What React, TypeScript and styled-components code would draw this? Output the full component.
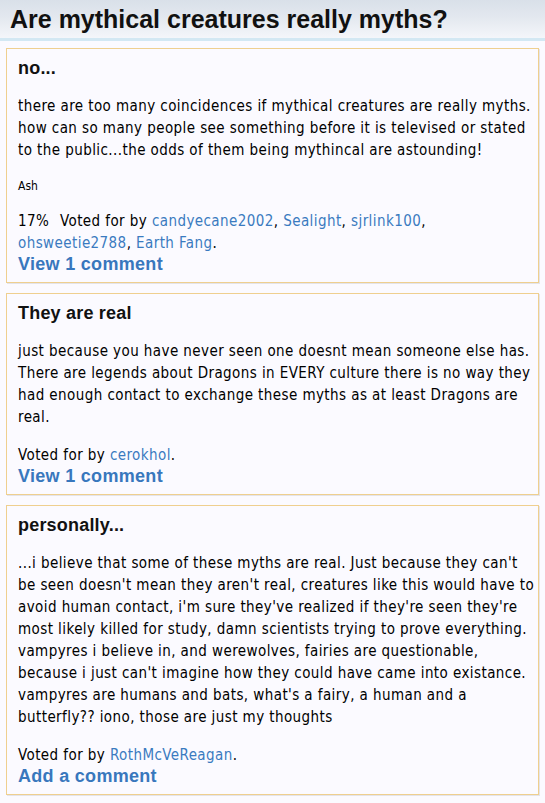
import React from 'react';
import styled, { createGlobalStyle } from 'styled-components';

const GlobalStyle = createGlobalStyle`
  html, body {
    margin: 0;
    padding: 0;
    background: #fbfaff;
  }
`;

const Page = styled.div`
  min-height: 803px;
  background: #fbfaff;
  font-family: "DejaVu Sans Condensed", "DejaVu Sans", sans-serif;
  color: #000;
`;

const Header = styled.header`
  height: 38px;
  padding-left: 10px;
  display: flex;
  align-items: center;
  background: linear-gradient(to bottom, #d9e0e9 0%, #e3e8ef 45%, #f4f6fa 100%);
  border-bottom: 3px solid #d3e8f3;
`;

const Title = styled.h1`
  margin: 0;
  font-family: "Liberation Sans", Arial, sans-serif;
  font-size: 25px;
  font-weight: bold;
  color: #111;
`;

const List = styled.div`
  display: flex;
  flex-direction: column;
  gap: 10px;
  padding: 7px 6px 0 6px;
`;

const Card = styled.section`
  border: 1px solid #efcf8f;
  box-shadow: 1px 1px 0 #e4e4ea;
  padding: 8px 3px 8px 11px;
`;

const Heading = styled.h2`
  margin: 0;
  font-family: "Liberation Sans", Arial, sans-serif;
  font-size: 18px;
  letter-spacing: 0.2px;
  line-height: 22px;
  font-weight: bold;
  color: #111;
`;

const Body = styled.p`
  margin: 16px 0 0 0;
  font-size: 15px;
  letter-spacing: 0.42px;
  line-height: 22px;
`;

const Signature = styled.p`
  margin: 17px 0 0 0;
  font-size: 12px;
  line-height: 16px;
`;

const Votes = styled.p`
  margin: 16px 0 0 0;
  font-size: 15px;
  letter-spacing: 0.42px;
  line-height: 22px;
`;

const Percent = styled.span`
  margin-right: 6px;
`;

const User = styled.a`
  color: #3a7ac0;
  text-decoration: none;
`;

const CommentLink = styled.a`
  display: block;
  font-family: "Liberation Sans", Arial, sans-serif;
  font-size: 18px;
  letter-spacing: 0.3px;
  line-height: 20px;
  font-weight: bold;
  color: #3877bd;
  text-decoration: none;
`;

interface Answer {
  title: string;
  text: string;
  signature?: string;
  percent?: string;
  voters: string[];
  comment: string;
}

const answers: Answer[] = [
  {
    title: 'no...',
    text: 'there are too many coincidences if mythical creatures are really myths. how can so many people see something before it is televised or stated to the public...the odds of them being mythincal are astounding!',
    signature: 'Ash',
    percent: '17%',
    voters: ['candyecane2002', 'Sealight', 'sjrlink100', 'ohsweetie2788', 'Earth Fang'],
    comment: 'View 1 comment',
  },
  {
    title: 'They are real',
    text: 'just because you have never seen one doesnt mean someone else has. There are legends about Dragons in EVERY culture there is no way they had enough contact to exchange these myths as at least Dragons are real.',
    voters: ['cerokhol'],
    comment: 'View 1 comment',
  },
  {
    title: 'personally...',
    text: "...i believe that some of these myths are real. Just because they can't be seen doesn't mean they aren't real, creatures like this would have to avoid human contact, i'm sure they've realized if they're seen they're most likely killed for study, damn scientists trying to prove everything. vampyres i believe in, and werewolves, fairies are questionable, because i just can't imagine how they could have came into existance. vampyres are humans and bats, what's a fairy, a human and a butterfly?? iono, those are just my thoughts",
    voters: ['RothMcVeReagan'],
    comment: 'Add a comment',
  },
];

const App: React.FC = () => {
  return (
    <Page>
      <GlobalStyle />
      <Header>
        <Title>Are mythical creatures really myths?</Title>
      </Header>
      <List>
        {answers.map((a, index) => (
          <Card key={index}>
            <Heading>{a.title}</Heading>
            <Body>{a.text}</Body>
            {a.signature && <Signature>{a.signature}</Signature>}
            <Votes>
              {a.percent && <Percent>{a.percent}</Percent>} Voted for by{' '}
              {a.voters.map((v, i) => (
                <React.Fragment key={i}>
                  <User href="#">{v}</User>
                  {i < a.voters.length - 1 ? ', ' : '.'}
                </React.Fragment>
              ))}
            </Votes>
            <CommentLink href="#">{a.comment}</CommentLink>
          </Card>
        ))}
      </List>
    </Page>
  );
};

export default App;
